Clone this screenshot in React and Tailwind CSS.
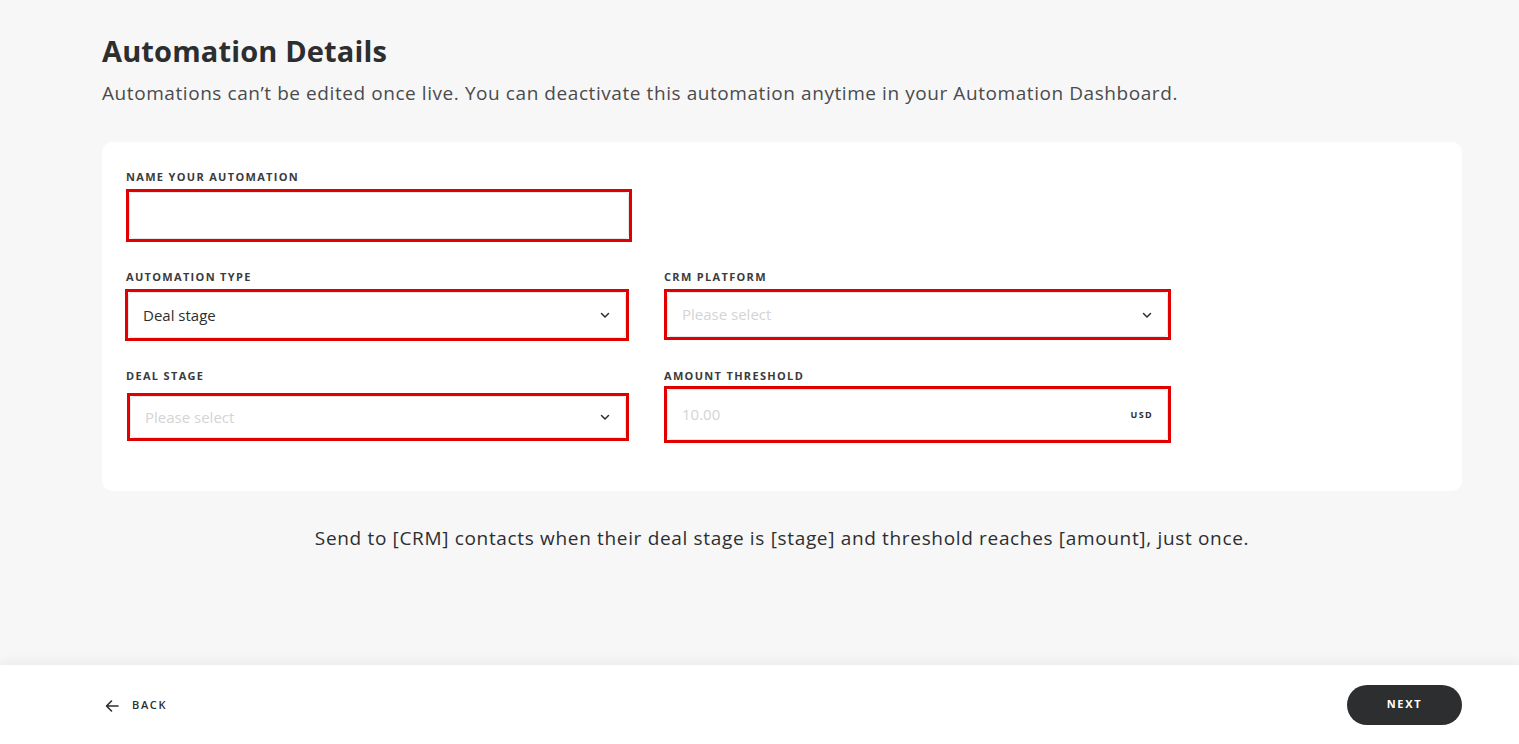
import React from 'react';

const font = { fontFamily: '"Open Sans", "Liberation Sans", sans-serif' };

function Chevron() {
  return (
    <svg width="12" height="12" viewBox="0 0 12 12" fill="none" className="text-[#2d2e30]">
      <path d="M2.5 4.5L6 8L9.5 4.5" stroke="currentColor" strokeWidth="1.5" strokeLinecap="round" strokeLinejoin="round" />
    </svg>
  );
}

function Label({ children }) {
  return (
    <div className="text-[11px] font-bold tracking-[0.12em] text-[#3a3b3d] leading-[14px] mb-[5px] uppercase">
      {children}
    </div>
  );
}

function Field({ label, children, box = 'h-[53px]' }) {
  return (
    <div>
      <Label>{label}</Label>
      <div className={`border-[3px] border-[#e00000] bg-white flex items-center ${box}`}>
        <div className="w-full h-full border border-[#e6e6e6] rounded-[4px] flex items-center px-[14px]">
          {children}
        </div>
      </div>
    </div>
  );
}

function SelectValue({ value, placeholder }) {
  return (
    <>
      <span className={`flex-1 text-[15px] ${value ? 'text-[#2d2e30]' : 'text-[#d4d4d4]'}`}>
        {value || placeholder}
      </span>
      <Chevron />
    </>
  );
}

export default function App() {
  return (
    <div className="min-h-screen bg-[#f7f7f7] flex flex-col" style={font}>
      <main className="flex-1 pl-[102px] pr-[57px] pt-[31px]">
        <h1 className="text-[29px] font-bold leading-[40px] text-[#2d2e30] tracking-[0.005em]">Automation Details</h1>
        <p className="mt-[9px] text-[19px] leading-[26px] text-[#4a4b4d] tracking-[0.03em]">
          Automations can’t be edited once live. You can deactivate this automation anytime in your Automation Dashboard.
        </p>

        <div className="mt-[36px] bg-white rounded-[10px] pl-[24px] pt-[28px] pb-[48px]">
          <div className="grid grid-cols-[506px_507px] gap-x-[32px] gap-y-[28px]">
            <Field label="Name your automation">
              <span />
            </Field>
            <div />
            <Field label="Automation type" box="h-[52px] -ml-[1px] w-[504px]">
              <SelectValue value="Deal stage" />
            </Field>
            <Field label="CRM Platform" box="h-[51px] mt-[3px]">
              <SelectValue placeholder="Please select" />
            </Field>
            <Field label="Deal stage" box="h-[48px] mt-[10px] ml-[1px] w-[502px]">
              <SelectValue placeholder="Please select" />
            </Field>
            <Field label="Amount threshold" box="h-[57px] -mt-[2px]">
              <span className="flex-1 text-[15px] text-[#d4d4d4]">10.00</span>
              <span className="text-[9px] font-bold tracking-[0.15em] text-[#2d2e30]">USD</span>
            </Field>
          </div>
        </div>

        <p className="mt-[34px] text-center text-[19px] leading-[26px] text-[#2d2e30] tracking-[0.035em]">
          Send to [CRM] contacts when their deal stage is [stage] and threshold reaches [amount], just once.
        </p>
      </main>

      <footer className="h-[79px] bg-white shadow-[0_-4px_10px_rgba(0,0,0,0.05)] flex items-center justify-between pl-[104px] pr-[57px]">
        <button className="flex items-center gap-[12px] text-[#2d2e30] mt-[2px]">
          <svg width="16" height="16" viewBox="0 0 16 16" fill="none">
            <path d="M14 8H2.5M7.5 3L2.5 8L7.5 13" stroke="currentColor" strokeWidth="1.6" strokeLinecap="round" strokeLinejoin="round" />
          </svg>
          <span className="text-[11px] font-semibold tracking-[0.15em]">BACK</span>
        </button>
        <button className="w-[115px] h-[40px] rounded-full bg-[#2d2e30] text-white text-[11px] font-bold tracking-[0.15em]">
          NEXT
        </button>
      </footer>
    </div>
  );
}
